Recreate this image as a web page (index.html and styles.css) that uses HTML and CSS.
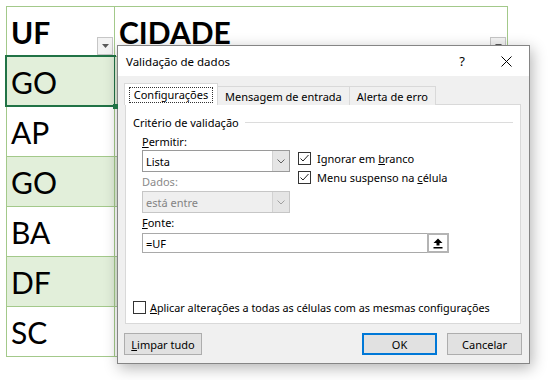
FILE: index.html
```html
<!DOCTYPE html>
<html lang="pt-BR">
<head>
  <meta charset="UTF-8">
  <meta name="viewport" content="width=device-width, initial-scale=1.0">
  <title>Validação de dados</title>
  <link rel="stylesheet" href="styles.css">
</head>
<body>
  <div class="sheet">
    <div class="grid">
      <div class="cell head">UF<span class="filter-btn"><svg width="7" height="4" viewBox="0 0 7 4"><polygon points="0,0 7,0 3.5,4" fill="#595959"/></svg></span></div>
      <div class="cell head">CIDADE<span class="filter-btn"><svg width="7" height="4" viewBox="0 0 7 4"><polygon points="0,0 7,0 3.5,4" fill="#595959"/></svg></span></div>
      <div class="cell alt selected">GO</div><div class="cell alt"></div>
      <div class="cell">AP</div><div class="cell"></div>
      <div class="cell alt">GO</div><div class="cell alt"></div>
      <div class="cell">BA</div><div class="cell"></div>
      <div class="cell alt">DF</div><div class="cell alt"></div>
      <div class="cell">SC</div><div class="cell"></div>
    </div>
  </div>

  <div class="dialog">
    <div class="title-bar">
      <div class="title">Validação de dados</div>
      <div class="title-controls">
        <span class="help">?</span>
        <svg class="close" width="11" height="11" viewBox="0 0 11 11"><path d="M0.5 0.5 L10.5 10.5 M10.5 0.5 L0.5 10.5" stroke="#000" stroke-width="1"/></svg>
      </div>
    </div>

    <div class="dialog-body">
      <div class="tabs">
        <div class="tab active"><span class="focus">Configurações</span></div>
        <div class="tab">Mensagem de entrada</div>
        <div class="tab">Alerta de erro</div>
      </div>

      <div class="panel">
        <div class="group-title"><span>Critério de validação</span><span class="line"></span></div>

        <div class="form-grid">
          <div class="label"><u>P</u>ermitir:</div>
          <div class="combo">
            <span class="combo-text">Lista</span>
            <span class="combo-btn"><svg width="8" height="5" viewBox="0 0 8 5"><polyline points="0.5,0.5 4,4 7.5,0.5" fill="none" stroke="#606060"/></svg></span>
          </div>
          <div class="checks">
            <label class="check"><span class="box"><svg width="11" height="11" viewBox="0 0 11 11"><polyline points="1.5,5.5 4,8 9.5,2" fill="none" stroke="#222" stroke-width="1"/></svg></span><span>Ignorar em <u>b</u>ranco</span></label>
            <label class="check"><span class="box"><svg width="11" height="11" viewBox="0 0 11 11"><polyline points="1.5,5.5 4,8 9.5,2" fill="none" stroke="#222" stroke-width="1"/></svg></span><span>Menu suspenso na <u>c</u>élula</span></label>
          </div>
          <div class="label disabled">Dados:</div>
          <div class="combo disabled">
            <span class="combo-text">está entre</span>
            <span class="combo-btn"><svg width="8" height="5" viewBox="0 0 8 5"><polyline points="0.5,0.5 4,4 7.5,0.5" fill="none" stroke="#a0a0a0"/></svg></span>
          </div>
        </div>

        <div class="label fonte"><u>F</u>onte:</div>
        <div class="ref-input">
          <span class="ref-text">=UF</span>
          <span class="ref-btn"><svg width="10" height="11" viewBox="0 0 10 11"><polygon points="5,0.5 9.5,5 6.5,5 6.5,7.5 3.5,7.5 3.5,5 0.5,5" fill="#000"/><rect x="0.5" y="9" width="9" height="1.5" fill="#000"/></svg></span>
        </div>

        <label class="check apply"><span class="box"></span><span><u>A</u>plicar alterações a todas as células com as mesmas configurações</span></label>
      </div>

      <div class="buttons">
        <button class="btn btn-clear"><u>L</u>impar tudo</button>
        <div class="spacer"></div>
        <button class="btn btn-default">OK</button>
        <button class="btn">Cancelar</button>
      </div>
    </div>
  </div>
</body>
</html>
```

FILE: styles.css
```css
* {
  margin: 0;
  padding: 0;
  box-sizing: border-box;
}

body {
  width: 548px;
  height: 380px;
  overflow: hidden;
  background: #fff;
  position: relative;
  font-family: "Noto Sans", "Open Sans", sans-serif;
}

/* planilha ao fundo */
.sheet {
  padding: 6px 0 0 6px;
}

.grid {
  display: grid;
  grid-template-columns: 108px 393px;
  grid-auto-rows: 50px;
  border-left: 1px solid #a3c98a;
  border-top: 1px solid #a3c98a;
  width: 502px;
}

.cell {
  position: relative;
  border-right: 1px solid #a3c98a;
  border-bottom: 1px solid #a3c98a;
  font-family: Lato, "Liberation Sans", sans-serif;
  font-size: 30px;
  color: #000;
  display: flex;
  align-items: center;
  padding-left: 4px;
  background: #fff;
}

.cell.head {
  font-weight: bold;
}

.cell.alt {
  background: #e2efda;
}

.cell.selected::after {
  content: "";
  position: absolute;
  top: -2px;
  left: -2px;
  right: -2px;
  bottom: -1px;
  border: 2px solid #217346;
}

.cell.selected::before {
  content: "";
  position: absolute;
  right: -4px;
  bottom: -3px;
  width: 5px;
  height: 5px;
  background: #217346;
  z-index: 1;
}

.filter-btn {
  position: absolute;
  right: 1px;
  bottom: 1px;
  width: 16px;
  height: 18px;
  background: #f3f3f3;
  border: 1px solid #c6c6c6;
  display: flex;
  align-items: center;
  justify-content: center;
}

/* janela de diálogo */
.dialog {
  position: absolute;
  left: 117px;
  top: 45px;
  width: 413px;
  height: 319px;
  border: 1px solid #858585;
  background: #f0f0f0;
  box-shadow: 2px 4px 14px rgba(0, 0, 0, 0.3);
  font-size: 11px;
  color: #000;
  display: flex;
  flex-direction: column;
}

.title-bar {
  height: 30px;
  background: #fff;
  display: flex;
  align-items: center;
  justify-content: space-between;
  padding: 0 17px 0 8px;
}

.title {
  font-size: 11.5px;
}

.title-controls {
  display: flex;
  align-items: center;
  gap: 36px;
}

.help {
  font-size: 13px;
}

.dialog-body {
  flex: 1;
  padding: 7px 7px 0 6px;
  display: flex;
  flex-direction: column;
}

.tabs {
  display: flex;
  align-items: flex-end;
  height: 22px;
  margin-bottom: -1px;
  position: relative;
  z-index: 1;
}

.tab {
  height: 19px;
  padding: 0 7px;
  border: 1px solid #d9d9d9;
  border-bottom: none;
  border-left: none;
  background: #f0f0f0;
  display: flex;
  align-items: center;
}

.tab.active {
  height: 22px;
  width: 94px;
  padding: 0 4px;
  background: #fff;
  border-left: 1px solid #d9d9d9;
  justify-content: center;
}

.focus {
  border: 1px dotted #333;
  padding: 0 4px;
  line-height: 14px;
}

.panel {
  height: 220px;
  margin: 0 1px 0 1px;
  background: #fff;
  border: 1px solid #d9d9d9;
  padding: 9px 7px 9px 7px;
  display: flex;
  flex-direction: column;
}

.group-title {
  display: flex;
  align-items: center;
  height: 16px;
  gap: 6px;
}

.group-title .line {
  flex: 1;
  height: 1px;
  background: #dcdcdc;
}

.form-grid {
  display: grid;
  grid-template-columns: 148px 1fr;
  column-gap: 8px;
  margin: 4px 0 0 9px;
}

.label {
  height: 16px;
  line-height: 16px;
}

.label.disabled {
  color: #8a8a8a;
  margin-top: 2px;
}

.form-grid .label {
  grid-column: 1;
}

.combo {
  grid-column: 1;
  height: 22px;
  border: 1px solid #9a9a9a;
  background: #fff;
  display: flex;
  align-items: center;
}

.combo.disabled {
  margin-top: 1px;
  background: #efefef;
  border-color: #c6c6c6;
  color: #838383;
}

.combo-text {
  flex: 1;
  padding-left: 3px;
}

.combo-btn {
  width: 17px;
  height: 100%;
  background: #e5e5e5;
  border-left: 1px solid #d2d2d2;
  display: flex;
  align-items: center;
  justify-content: center;
}

.checks {
  grid-column: 2;
  grid-row: 2 / span 3;
  margin-top: -1px;
}

.check {
  display: flex;
  align-items: center;
  height: 19px;
  gap: 6px;
}

.box {
  width: 13px;
  height: 13px;
  flex: none;
  border: 1px solid #333;
  background: #fff;
  display: flex;
  align-items: center;
  justify-content: center;
}

.label.fonte {
  margin: 2px 0 0 9px;
}

.ref-input {
  margin: 2px 0 0 9px;
  width: 307px;
  height: 20px;
  border: 1px solid #a9a9a9;
  display: flex;
  align-items: center;
}

.ref-text {
  flex: 1;
  padding-left: 3px;
}

.ref-btn {
  width: 22px;
  height: 20px;
  margin-right: -1px;
  border: 2px solid #b4b4b4;
  background: #fff;
  display: flex;
  align-items: center;
  justify-content: center;
}

.check.apply {
  margin-top: auto;
  height: 13px;
  gap: 4px;
  font-size: 10.8px;
}

.buttons {
  display: flex;
  align-items: center;
  gap: 10px;
  margin-top: 9px;
}

.spacer {
  flex: 1;
}

.btn {
  font-family: inherit;
  font-size: 11px;
  height: 22px;
  width: 75px;
  padding: 0 6px;
  background: #e1e1e1;
  border: 1px solid #adadad;
  color: #000;
}

.btn-clear {
  width: 78px;
}

.btn-default {
  border: 2px solid #0078d7;
}
```
